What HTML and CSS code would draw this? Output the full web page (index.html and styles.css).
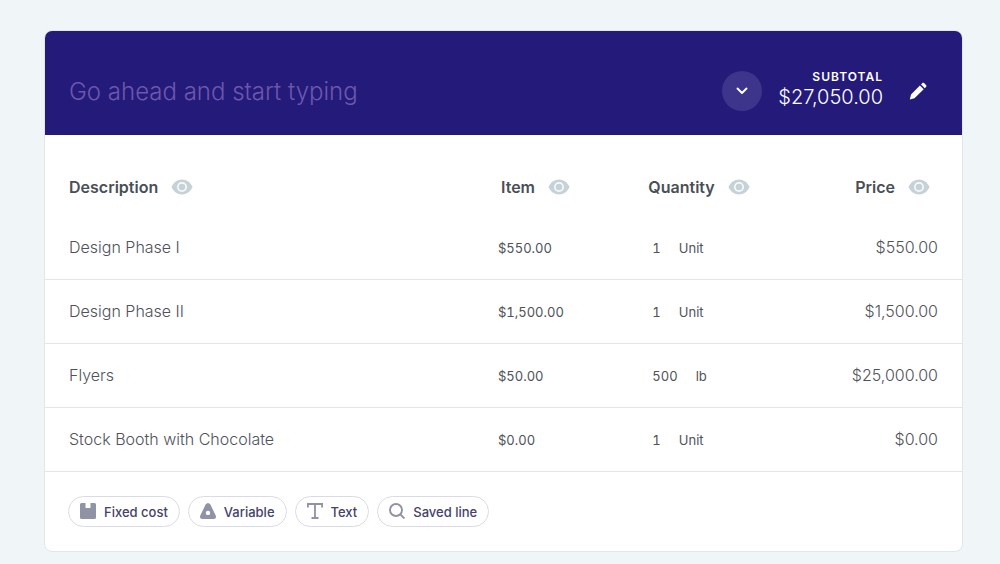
FILE: index.html
```html
<!DOCTYPE html>
<html lang="en">
<head>
<meta charset="utf-8">
<meta name="viewport" content="width=device-width, initial-scale=1">
<title>Budget section</title>
<link rel="stylesheet" href="styles.css">
</head>
<body>
<svg class="sprite" aria-hidden="true">
  <symbol id="eye" viewBox="0 0 22 16">
    <path fill="#c6d2d7" d="M11 .5C6.300.5 2.600 3.400.5 8c2.100 4.600 5.800 7.500 10.500 7.500S19.400 12.600 21.500 8C19.400 3.400 15.700.5 11 .5z"/>
    <circle cx="11" cy="8" r="5" fill="#f6fafb"/>
    <circle cx="11" cy="8" r="3.300" fill="#c6d2d7"/>
  </symbol>
</svg>
<main class="card">
  <header class="banner">
    <input class="title-input" type="text" aria-label="Section title" placeholder="Go ahead and start typing">
    <button class="toggle" type="button" aria-label="Collapse section">
      <svg width="14" height="10" viewBox="0 0 14 10"><path d="M2.500 2.500 7 7l4.500-4.500" fill="none" stroke="#fff" stroke-width="1.900" stroke-linecap="round" stroke-linejoin="round"/></svg>
    </button>
    <div class="subtotal">
      <span class="subtotal-label">SUBTOTAL</span>
      <span class="subtotal-value">$27,050.00</span>
    </div>
    <button class="edit" type="button" aria-label="Edit section">
      <svg width="18" height="18" viewBox="0 0 18 18"><path fill="#fff" d="M.8 17.400l1.200-5L10.900 3.500l3.800 3.800-9.200 9zM12 2.400l1.200-1.200c.6-.6 1.500-.6 2.100 0l1.700 1.700c.6.6.6 1.500 0 2.100l-1.200 1.200z"/></svg>
    </button>
  </header>
  <table class="lines">
    <colgroup><col class="col-description"><col class="col-item"><col class="col-quantity"><col class="col-price"></colgroup>
    <thead>
      <tr>
        <th scope="col"><div class="heading">Description <button class="eye" type="button" aria-label="Toggle description"><svg width="22" height="16"><use href="#eye"/></svg></button></div></th>
        <th scope="col"><div class="heading heading-item">Item <button class="eye" type="button" aria-label="Toggle item"><svg width="22" height="16"><use href="#eye"/></svg></button></div></th>
        <th scope="col"><div class="heading">Quantity <button class="eye" type="button" aria-label="Toggle quantity"><svg width="22" height="16"><use href="#eye"/></svg></button></div></th>
        <th scope="col"><div class="heading heading-price">Price <button class="eye" type="button" aria-label="Toggle price"><svg width="22" height="16"><use href="#eye"/></svg></button></div></th>
      </tr>
    </thead>
    <tbody>
      <tr><td>Design Phase I</td><td class="small">$550.00</td><td class="small"><div class="amount"><span>1</span><span>Unit</span></div></td><td class="price">$550.00</td></tr>
      <tr><td>Design Phase II</td><td class="small">$1,500.00</td><td class="small"><div class="amount"><span>1</span><span>Unit</span></div></td><td class="price">$1,500.00</td></tr>
      <tr><td>Flyers</td><td class="small">$50.00</td><td class="small"><div class="amount"><span>500</span><span>lb</span></div></td><td class="price">$25,000.00</td></tr>
      <tr><td>Stock Booth with Chocolate</td><td class="small">$0.00</td><td class="small"><div class="amount"><span>1</span><span>Unit</span></div></td><td class="price">$0.00</td></tr>
    </tbody>
  </table>
  <footer class="actions">
    <button class="chip" type="button">
      <svg width="16" height="16" viewBox="0 0 16 16"><path fill="#9092a6" d="M1.500 0H5.500V5h5V0h4Q16 0 16 1.500v13Q16 16 14.500 16h-13Q0 16 0 14.500v-13Q0 0 1.500 0z"/></svg>
      <span>Fixed cost</span>
    </button>
    <button class="chip" type="button">
      <svg width="16" height="16" viewBox="0 0 16 16"><path fill="#9092a6" fill-rule="evenodd" d="M5.600 1.500Q8-1.500 10.400 1.500L15.700 12.600Q16.800 16 13.800 16H2.200Q-.8 16 .3 12.600zM8 7.700a2.200 2.200 0 1 0 0 4.400A2.200 2.200 0 0 0 8 7.700z"/></svg>
      <span>Variable</span>
    </button>
    <button class="chip" type="button">
      <svg width="16" height="16" viewBox="0 0 16 16"><path fill="none" stroke="#9092a6" stroke-width="1.800" d="M.9 4.500V1h14.200v3.500M8 1v14M4.500 15h7"/></svg>
      <span>Text</span>
    </button>
    <button class="chip" type="button">
      <svg width="16" height="16" viewBox="0 0 16 16"><g fill="none" stroke="#9092a6" stroke-width="1.900"><circle cx="7" cy="7" r="6"/><path d="m11.300 11.300 4.200 4.200"/></g></svg>
      <span>Saved line</span>
    </button>
  </footer>
</main>
</body>
</html>
```
FILE: styles.css
```css
* {
  box-sizing: border-box;
}

body {
  margin: 0;
  padding: 30px 37px 12px 44px;
  background: #f0f6f7;
  color: #4f5259;
  font-family: Inter, "Liberation Sans", sans-serif;
  font-size: 16px;
  font-weight: 360;
}

button {
  padding: 0;
  border: 0;
  background: none;
  font: inherit;
  cursor: pointer;
}

svg {
  display: block;
  flex: none;
}

.sprite {
  display: none;
}

.card {
  overflow: hidden;
  border: 1px solid #e1e6ea;
  border-radius: 8px;
  background: #fff;
}

.banner {
  display: flex;
  align-items: center;
  margin: -1px -1px 0;
  padding: 32px 36px 16px 25px;
  min-height: 105px;
  background: #241a7a;
  color: #fff;
}

.title-input {
  flex: 1;
  min-width: 0;
  padding: 2px 0 0;
  border: 0;
  outline: 0;
  background: none;
  color: #fff;
  font: inherit;
  font-size: 24px;
  font-weight: 340;
}

.title-input::placeholder {
  color: #6c57ad;
  opacity: 1;
}

.toggle {
  display: flex;
  align-items: center;
  justify-content: center;
  width: 40px;
  height: 40px;
  margin-right: 16px;
  border-radius: 50%;
  background: #3d348c;
}

.subtotal {
  display: flex;
  flex-direction: column;
  align-items: flex-end;
  margin-right: 26px;
  padding-bottom: 4px;
}

.subtotal-label {
  font-size: 12px;
  font-weight: 600;
  line-height: 16px;
  letter-spacing: 1px;
}

.subtotal-value {
  font-size: 20px;
  font-weight: 320;
  line-height: 24px;
}

.lines {
  width: 100%;
  border-collapse: collapse;
  table-layout: fixed;
}

.col-description {
  width: 49.4%;
}

.col-item {
  width: 16.4%;
}

.col-quantity {
  width: 16.4%;
}

th {
  height: 80px;
  padding: 24px 0 0;
  color: #494f55;
  font-weight: 600;
  text-align: left;
}

td {
  height: 64px;
  padding: 0;
  border-bottom: 1px solid #e3e5e7;
}

th:first-child,
td:first-child {
  padding-left: 24px;
}

.heading {
  display: flex;
  align-items: center;
  gap: 13px;
}

.heading-item {
  padding-left: 3px;
}

.heading-price {
  justify-content: flex-end;
  padding-right: 32px;
}

.small {
  padding-top: 2px;
  font-size: 13px;
  font-weight: 400;
  font-variant-numeric: tabular-nums;
}

.amount {
  display: flex;
  gap: 18px;
  padding-left: 4px;
}

.price {
  padding-right: 24px;
  text-align: right;
}

.actions {
  display: flex;
  flex-wrap: wrap;
  gap: 8px;
  padding: 24px 24px 24px 23px;
}

.chip {
  display: flex;
  align-items: center;
  gap: 8px;
  height: 31px;
  padding: 0 11px;
  border: 1px solid #d9dce4;
  border-radius: 16px;
  color: #44426a;
  font-size: 13px;
  font-weight: 550;
}

.chip span {
  padding-top: 2px;
}
```
